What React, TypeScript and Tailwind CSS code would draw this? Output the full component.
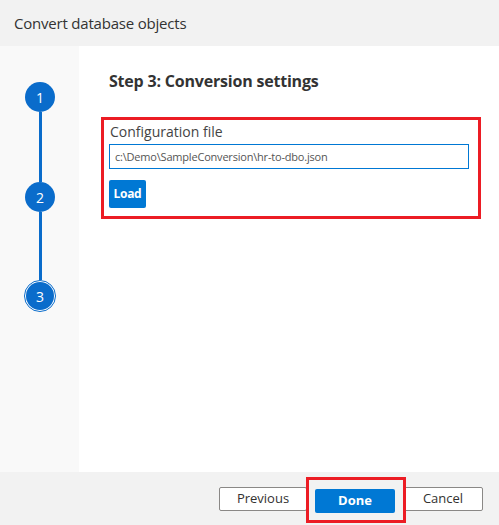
import React from "react"

const BLUE = "bg-[#0a6ccb]"

function StepDot({ n, active }: { n: number; active?: boolean }) {
  if (active) {
    return (
      <div className="w-[32px] h-[32px] rounded-full border border-[#0a6ccb] p-[1px] bg-white">
        <div className={`w-full h-full rounded-full ${BLUE} text-white flex items-center justify-center text-[14px]`}>{n}</div>
      </div>
    )
  }
  return (
    <div className={`w-[30px] h-[30px] rounded-full ${BLUE} text-white flex items-center justify-center text-[14px]`}>{n}</div>
  )
}

export default function App() {
  return (
    <div className="w-[499px] h-[525px] flex flex-col bg-white text-[#323130]" style={{ fontFamily: '"Open Sans", "Noto Sans", sans-serif' }}>
      {/* header */}
      <div className="h-[46px] bg-[#f2f2f2] flex items-center px-[14px]">
        <h1 className="text-[15px] text-[#333] tracking-[-0.2px]">Convert database objects</h1>
      </div>

      <div className="flex flex-1 min-h-0">
        {/* stepper */}
        <div className="w-[79px] bg-[#f9f9f9] flex flex-col items-center pt-[36px] pl-[1px]">
          <StepDot n={1} />
          <div className="w-[3px] h-[70px] bg-[#0a6ccb]" />
          <StepDot n={2} />
          <div className="w-[3px] h-[68px] bg-[#0a6ccb]" />
          <StepDot n={3} active />
        </div>

        {/* main */}
        <div className="flex-1 pl-[22px] pr-[18px] pt-[24px]">
          <h2 className="text-[16px] font-bold text-[#333] leading-[22px] pl-[8px] tracking-[-0.2px]">Step 3: Conversion settings</h2>
          <div className="mt-[25px] border-[3px] border-[#ec1c24] pl-[5px] pr-[9px] pt-[2px] pb-[8px]">
            <div className="text-[14px] text-[#444] leading-[20px] pl-[1px]">Configuration file</div>
            <input
              readOnly
              value="c:\Demo\SampleConversion\hr-to-dbo.json"
              className="mt-[2px] block w-full h-[25px] border border-[#0078d4] px-[5px] text-[11px] text-[#555] outline-none tracking-[-0.2px]"
            />
            <button className="mt-[11px] block w-[37px] h-[28px] bg-[#0078d4] text-white text-[12px] font-bold rounded-[2px] tracking-[-0.3px]">Load</button>
          </div>
        </div>
      </div>

      {/* footer */}
      <div className="h-[53px] bg-[#f2f2f2] flex items-start justify-end pt-[15px] pr-[16px] gap-[8px]">
        <button className="w-[88px] h-[24px] bg-white border border-[#8a8886] rounded-[2px] text-[13px] text-[#323130]">Previous</button>
        <div className="relative">
          <button className="w-[80px] h-[24px] bg-[#0078d4] rounded-[2px] text-[13px] font-bold text-white">Done</button>
          <span className="absolute -left-[9px] -right-[11px] -top-[10px] -bottom-[10px] border-[3px] border-[#ec1c24] pointer-events-none" />
        </div>
        <button className="w-[80px] h-[24px] bg-white border border-[#8a8886] rounded-[2px] text-[13px] text-[#323130]">Cancel</button>
      </div>
    </div>
  )
}
